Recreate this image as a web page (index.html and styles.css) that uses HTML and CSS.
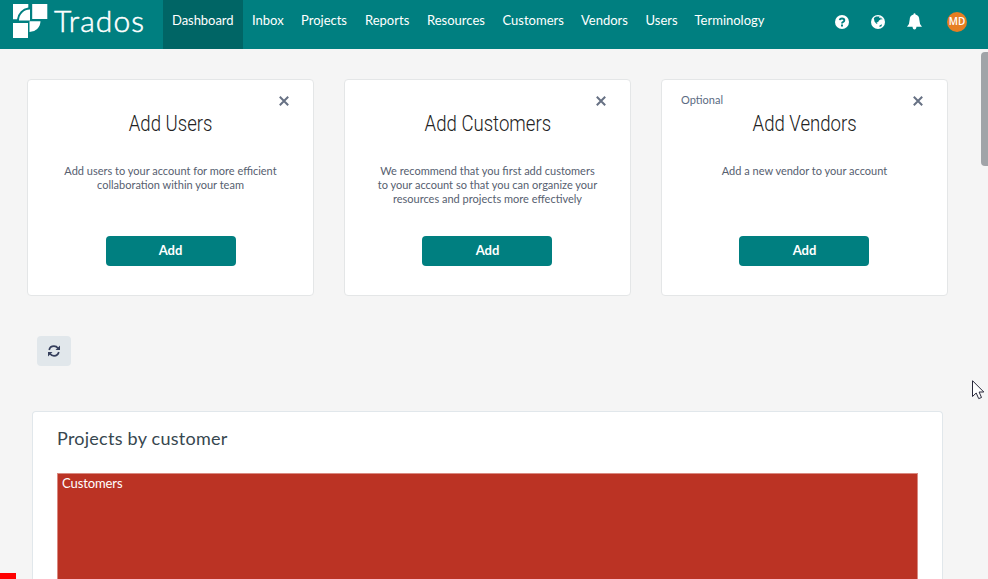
FILE: index.html
```html
<!DOCTYPE html>
<html lang="en">
<head>
<meta charset="utf-8">
<title>Trados</title>
<link rel="stylesheet" href="styles.css">
</head>
<body>
<header class="topbar">
  <div class="brand">
    <svg class="brand-mark" width="35" height="34" viewBox="0 0 35 34" fill="#fff"><path d="M0 0H15.300V3.500A13.300 13.300 0 0 0 4 15.200H0ZM19.200 0H34.300V15H19.200ZM17 5.500V16.500H6A11 11 0 0 1 17 5.500ZM16.500 17.300H27.500A11 11 0 0 1 16.500 28ZM0 19H15V34H0Z"/></svg>
    <span class="brand-name">Trados</span>
  </div>
  <nav class="nav">
    <a class="active w-dash"><span>Dashboard</span></a><a class="w-inbox"><span>Inbox</span></a><a class="w-proj"><span>Projects</span></a><a class="w-rep"><span>Reports</span></a><a class="w-res"><span>Resources</span></a><a class="w-cust"><span>Customers</span></a><a class="w-vend"><span>Vendors</span></a><a class="w-users"><span>Users</span></a><a class="w-term"><span>Terminology</span></a>
  </nav>
  <div class="tools">
    <svg width="14" height="14" viewBox="0 0 14 14"><circle cx="7" cy="7" r="7" fill="#fff"/><path d="M4.700 5.200Q5 3.500 7 3.500Q9.300 3.500 9.300 5.300Q9.300 6.300 8.200 6.900Q7 7.500 7 8.400" fill="none" stroke="#007f80" stroke-width="1.900"/><path d="M6 9.500h2v1.900H6z" fill="#007f80"/></svg>
    <svg width="14" height="14" viewBox="0 0 14 14"><circle cx="7" cy="7" r="7" fill="#fff"/><path d="M2.800 3L5 1.500 8.500 1.500 8 3 9.500 2.500 10 4.200 8 5.500 7 7.200 5.500 7 6.500 8.500 5.300 8.700 3.500 6.500ZM10 2.500L11.500 4 10.800 5ZM8.500 10.500L11 9.300 10.500 11.200 8.500 12Z" fill="#007f80"/></svg>
    <svg width="15" height="17" viewBox="0 0 15 17" fill="#fff"><path d="M6.500 1.500Q6.500 .3 7.500 .3T8.500 1.500Q12.300 2.500 12.300 6.500Q12.300 11 15 13.800H0Q2.700 11 2.700 6.500Q2.700 2.500 6.500 1.500ZM5.500 13.500h4Q9.300 16.500 7.500 16.500T5.500 13.500Z"/></svg>
    <span class="avatar">MD</span>
  </div>
</header>
<main class="page">
  <section class="cards">
    <article class="card">
      <div class="card-top"><span></span><svg width="10" height="10" viewBox="0 0 10 10"><path d="M.8 .8l8.400 8.400M9.200 .8L.8 9.200" stroke="#677184" stroke-width="2"/></svg></div>
      <h2>Add Users</h2>
      <p><span class="line">Add users to your account for more efficient</span><span class="line">collaboration within your team</span></p>
      <button>Add</button>
    </article>
    <article class="card">
      <div class="card-top"><span></span><svg width="10" height="10" viewBox="0 0 10 10"><path d="M.8 .8l8.400 8.400M9.200 .8L.8 9.200" stroke="#677184" stroke-width="2"/></svg></div>
      <h2>Add Customers</h2>
      <p><span class="line">We recommend that you first add customers</span><span class="line">to your account so that you can organize your</span><span class="line">resources and projects more effectively</span></p>
      <button>Add</button>
    </article>
    <article class="card">
      <div class="card-top"><span>Optional</span><svg width="10" height="10" viewBox="0 0 10 10"><path d="M.8 .8l8.400 8.400M9.200 .8L.8 9.200" stroke="#677184" stroke-width="2"/></svg></div>
      <h2>Add Vendors</h2>
      <p><span class="line">Add a new vendor to your account</span></p>
      <button>Add</button>
    </article>
  </section>
  <div class="refresh">
    <svg width="12" height="12" viewBox="0 0 12 12"><path d="M1.200 5Q2 1.200 6 1.200Q8.500 1.200 10 3.200M10.800 7Q10 10.800 6 10.800Q3.500 10.800 2 8.800" fill="none" stroke="#353f5c" stroke-width="1.700"/><path d="M12 .5V5H7.500ZM0 11.500V7H4.500Z" fill="#353f5c"/></svg>
  </div>
  <section class="panel">
    <h3>Projects by customer</h3>
    <div class="treemap"><span>Customers</span></div>
  </section>
</main>
<div class="scroll-thumb"></div>
<div class="progress"></div>
<svg class="cursor" width="13" height="20" viewBox="0 0 13 20"><path d="M.5 .7V16.500L4.200 13 6.700 18.600 9.500 17.500 7.100 12H11.800Z" fill="#fff" stroke="#28283a"/></svg>
</body>
</html>
```
FILE: styles.css
```css
* { box-sizing: border-box; }
body { margin: 0; height: 579px; overflow: hidden; background: #f5f5f5; font-family: Lato, sans-serif; color: #37474f; }
h2, h3, p { margin: 0; font-weight: 400; }
.topbar { height: 49px; background: #007f80; display: flex; color: #fff; }
.brand { width: 163px; padding: 4px 0 0 13px; display: flex; }
.brand-name { font-size: 30px; font-weight: 300; line-height: 33px; margin-left: 6px; letter-spacing: 1.1px; -webkit-text-stroke: .5px #fff; }
.nav { display: flex; }
.nav a { padding: 0 0 0 9px; font-size: 13px; line-height: 41px; white-space: nowrap; }
.nav .active { background: #006565; letter-spacing: -.05px; }
.w-dash { width: 80px; }
.w-inbox { width: 49px; }
.w-proj { width: 64px; }
.w-rep { width: 62px; }
.w-res { width: 75.5px; }
.w-cust { width: 78.5px; }
.w-vend { width: 64.5px; }
.w-users { width: 49px; }
.w-term { width: 89px; }
.tools { margin-left: auto; padding: 0 21px 6px 0; display: flex; align-items: center; gap: 22px; }
.avatar { width: 20px; height: 20px; margin-left: 3px; border-radius: 50%; background: #e67e22; font: 600 10px/19px "Open Sans", sans-serif; text-align: center; }
.page { padding: 30px 0 0 27px; }
.cards { display: grid; grid-template-columns: repeat(3, 287px); gap: 30px; }
.card { height: 217px; background: #fff; border: 1px solid #e4e6e7; border-radius: 4px; display: flex; flex-direction: column; align-items: center; }
.card-top { align-self: stretch; display: flex; justify-content: space-between; align-items: center; padding: 16px 24px 0 19px; height: 26px; color: #5b6b82; font-size: 11px; line-height: 10px; }
.card-top span { margin-top: -2px; }
.card h2 { font: 300 22px/28px Roboto, sans-serif; margin-top: 4px; color: #222; transform: scaleX(.845); white-space: nowrap; }
.card p { height: 72px; margin-top: 26px; font-size: 11px; line-height: 14px; color: #56606f; text-align: center; }
.line { display: block; white-space: nowrap; }
.card button { width: 130px; height: 30px; border: 0; border-radius: 4px; background: #007f80; color: #fff; font: 700 13px/28px Lato, sans-serif; padding: 0 0 2px; }
.card + .card button { margin-left: -1px; padding-left: 1px; }
.refresh { width: 34px; height: 30px; margin: 40px 0 0 10px; border-radius: 4px; background: #e1e7eb; display: flex; align-items: center; justify-content: center; }
.panel { width: 911px; height: 168px; margin: 45px 0 0 5px; padding: 13px 24px 0; background: #fff; border: 1px solid #e1e7eb; border-bottom: 0; border-radius: 4px 4px 0 0; }
.panel h3 { font-size: 18px; line-height: 26px; letter-spacing: .25px; }
.treemap { height: 106px; margin-top: 22px; background: #bb3324; border: 1px solid #d98980; border-bottom: 0; color: #fff; font-size: 13px; line-height: 18px; padding-left: 4px; letter-spacing: -.1px; }
.scroll-thumb { position: absolute; left: 981px; top: 52px; width: 7px; height: 114px; border-radius: 4px 0 0 4px; background: #a0a4a8; }
.progress { position: absolute; left: 0; top: 573px; width: 16px; height: 6px; background: red; }
.cursor { position: absolute; left: 972px; top: 380px; }
```
